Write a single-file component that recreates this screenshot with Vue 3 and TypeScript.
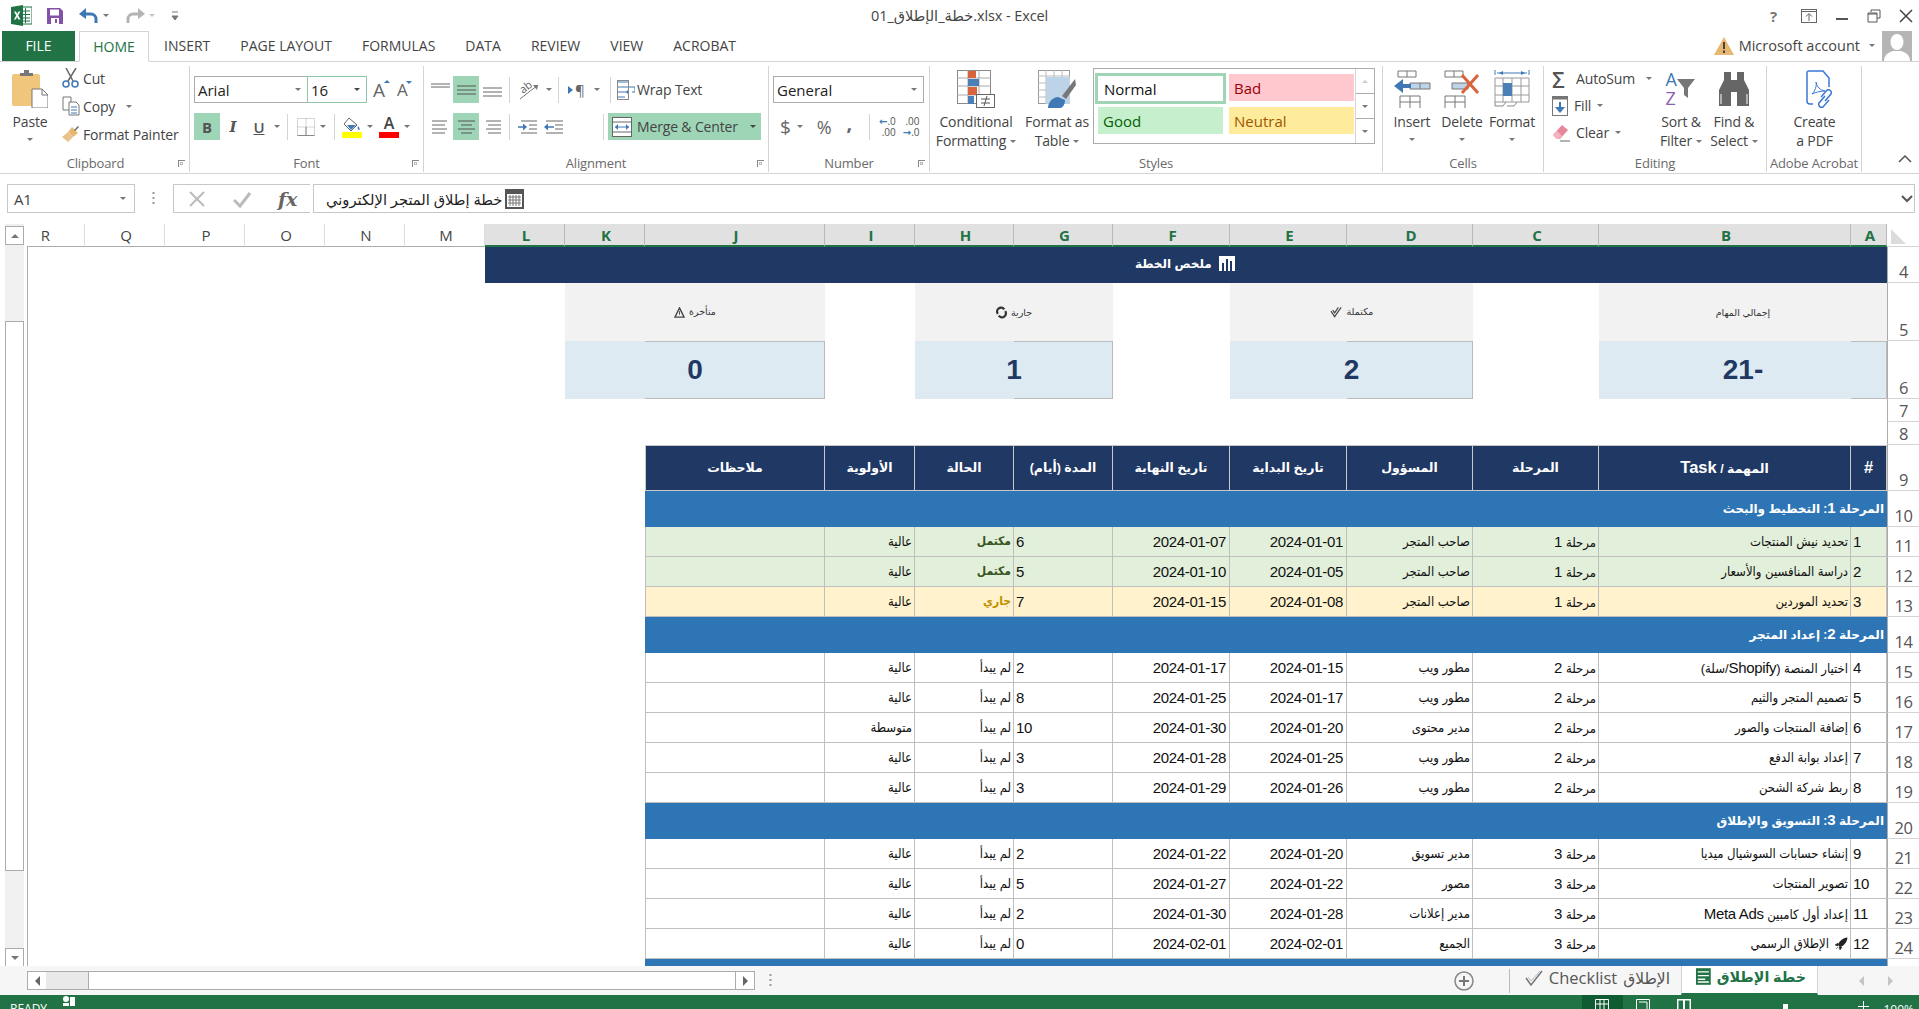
<script setup lang="ts">
interface Task {
  id: number
  task: string
  phase: number
  owner: string
  start: string
  end: string
  days: number
  status: string
  prio: string
  tone?: string
  rocket?: boolean
}

const letters = ['R', 'Q', 'P', 'O', 'N', 'M', 'L', 'K', 'J', 'I', 'H', 'G', 'F', 'E', 'D', 'C', 'B', 'A']
const selected = letters.slice(6)
const widths = [58, 80, 80, 80, 80, 80, 80, 80, 180, 90, 99, 99, 117, 117, 126, 126, 252, 36, 32]

const cards = [
  {label: 'متأخرة', value: '0', icon: 'warn', span: 180, gap: 1},
  {label: 'جارية', value: '1', icon: 'spin', span: 99, gap: 1},
  {label: 'مكتملة', value: '2', icon: 'check', span: 126, gap: 1},
  {label: 'إجمالي المهام', value: '-21', icon: '', span: 36, gap: 0},
]

const heads = ['ملاحظات', 'الأولوية', 'الحالة', 'المدة (أيام)', 'تاريخ النهاية', 'تاريخ البداية', 'المسؤول', 'المرحلة', 'المهمة / Task', '#']

const owner1 = 'صاحب المتجر'
const dev = 'مطور ويب'
const wait = 'لم يبدأ'
const high = 'عالية'

const sections: {title: string; row: number; tasks: Task[]}[] = [
  {
    title: 'المرحلة 1: التخطيط والبحث', row: 10, tasks: [
      {id: 1, task: 'تحديد نيش المنتجات', phase: 1, owner: owner1, start: '2024-01-01', end: '2024-01-07', days: 6, status: 'مكتمل', prio: high, tone: 'done'},
      {id: 2, task: 'دراسة المنافسين والأسعار', phase: 1, owner: owner1, start: '2024-01-05', end: '2024-01-10', days: 5, status: 'مكتمل', prio: high, tone: 'done'},
      {id: 3, task: 'تحديد الموردين', phase: 1, owner: owner1, start: '2024-01-08', end: '2024-01-15', days: 7, status: 'جاري', prio: high, tone: 'doing'},
    ],
  },
  {
    title: 'المرحلة 2: إعداد المتجر', row: 14, tasks: [
      {id: 4, task: 'اختيار المنصة (Shopify/سلة)', phase: 2, owner: dev, start: '2024-01-15', end: '2024-01-17', days: 2, status: wait, prio: high},
      {id: 5, task: 'تصميم المتجر والثيم', phase: 2, owner: dev, start: '2024-01-17', end: '2024-01-25', days: 8, status: wait, prio: high},
      {id: 6, task: 'إضافة المنتجات والصور', phase: 2, owner: 'مدير محتوى', start: '2024-01-20', end: '2024-01-30', days: 10, status: wait, prio: 'متوسطة'},
      {id: 7, task: 'إعداد بوابة الدفع', phase: 2, owner: dev, start: '2024-01-25', end: '2024-01-28', days: 3, status: wait, prio: high},
      {id: 8, task: 'ربط شركة الشحن', phase: 2, owner: dev, start: '2024-01-26', end: '2024-01-29', days: 3, status: wait, prio: high},
    ],
  },
  {
    title: 'المرحلة 3: التسويق والإطلاق', row: 20, tasks: [
      {id: 9, task: 'إنشاء حسابات السوشيال ميديا', phase: 3, owner: 'مدير تسويق', start: '2024-01-20', end: '2024-01-22', days: 2, status: wait, prio: high},
      {id: 10, task: 'تصوير المنتجات', phase: 3, owner: 'مصور', start: '2024-01-22', end: '2024-01-27', days: 5, status: wait, prio: high},
      {id: 11, task: 'إعداد أول كامبين Meta Ads', phase: 3, owner: 'مدير إعلانات', start: '2024-01-28', end: '2024-01-30', days: 2, status: wait, prio: high},
      {id: 12, task: 'الإطلاق الرسمي', phase: 3, owner: 'الجميع', start: '2024-02-01', end: '2024-02-01', days: 0, status: wait, prio: high, rocket: true},
    ],
  },
]

// latin runs are set a bit larger than the arabic, dejavu's arabic is wide
function parts(text: string) {
  return text.split(/([A-Za-z0-9#][A-Za-z0-9 ]*)/).filter(Boolean).map(t => ({t, lat: /^[A-Za-z0-9#]/.test(t)}))
}
</script>

<template>
  <div class="app">
    <header class="titlebar">
      <svg class="xl" width="21" height="21" viewBox="0 0 21 21">
        <rect x="8" y="2" width="13" height="17" fill="#fff" stroke="#217346"/>
        <path d="M11 6h8M11 9.500h8M11 13h8M11 16h8M14.500 3v15" stroke="#217346"/>
        <path d="M0 2 12 0v21L0 19z" fill="#217346"/>
        <path d="M3 6.500h2l1.200 2.600 1.300-2.600h1.900l-2.200 4 2.300 4H7.400L6.100 12l-1.300 2.500H2.900l2.300-4z" fill="#fff"/>
      </svg>
      <svg class="save" width="16" height="16" viewBox="0 0 16 16">
        <path d="M0 0h13l3 3v13H0z" fill="#8351a6"/>
        <rect x="3" y="1.500" width="9" height="6" fill="#fff"/>
        <rect x="4" y="10" width="8" height="6" fill="#fff"/>
        <rect x="8" y="11" width="2" height="4" fill="#8351a6"/>
      </svg>
      <svg class="undo" width="20" height="16" viewBox="0 0 20 16"><path d="M5 6h7a5 5 0 0 1 5 5v4" fill="none" stroke="#3f78b5" stroke-width="3"/><path d="M0 6 7 0v11z" fill="#3f78b5"/></svg>
      <i class="caret mini"></i>
      <svg class="redo" width="20" height="16" viewBox="0 0 20 16"><path d="M15 6H8a5 5 0 0 0-5 5v4" fill="none" stroke="#b4b4b4" stroke-width="3"/><path d="M20 6l-7-6v11z" fill="#b4b4b4"/></svg>
      <i class="caret mini pale"></i>
      <svg class="qat" width="8" height="10" viewBox="0 0 8 10"><path d="M1 1h6M1 5h6l-3 4z" fill="#777" stroke="#777"/></svg>
      <div class="doc-title">خطة_الإطلاق_01.xlsx - Excel</div>
      <div class="win">
        <span class="help">?</span>
        <svg width="16" height="14" viewBox="0 0 16 14"><rect x=".5" y=".5" width="15" height="13" fill="none" stroke="#666"/><path d="M1 2.500h14M8 12V5M5 7.500l3-3 3 3" fill="none" stroke="#666"/></svg>
        <svg width="14" height="14" viewBox="0 0 14 14"><path d="M1 10h12" stroke="#555" stroke-width="2"/></svg>
        <svg width="14" height="14" viewBox="0 0 14 14"><path d="M4 3V1h9v8h-3M1 4h9v9H1z" fill="none" stroke="#555"/><path d="M1 5h9" stroke="#555"/></svg>
        <svg width="14" height="14" viewBox="0 0 14 14"><path d="M1 1l12 12M13 1 1 13" stroke="#444" stroke-width="1.500"/></svg>
      </div>
    </header>

    <nav class="tabs">
      <a class="tab file">FILE</a>
      <a class="tab home">HOME</a>
      <a class="tab">INSERT</a>
      <a class="tab">PAGE LAYOUT</a>
      <a class="tab">FORMULAS</a>
      <a class="tab">DATA</a>
      <a class="tab">REVIEW</a>
      <a class="tab">VIEW</a>
      <a class="tab">ACROBAT</a>
      <div class="account">
        <svg width="20" height="18" viewBox="0 0 20 18"><path d="M10 0l10 18H0z" fill="#e8b872"/><path d="M9 5h2v7H9zM9 13.500h2V16H9z" fill="#444"/></svg>
        <span>Microsoft account</span>
        <i class="caret"></i>
        <div class="avatar">
          <svg width="30" height="30" viewBox="0 0 30 30"><rect width="30" height="30" fill="#b5b5b5"/><ellipse cx="15" cy="11" rx="6.500" ry="8" fill="#fff"/><path d="M2 30c0-7 6-9 9-10h8c3 1 9 3 9 10z" fill="#fff"/></svg>
        </div>
      </div>
    </nav>

    <section class="ribbon">
      <div class="group clipboard">
        <div class="body">
          <div class="big paste">
            <svg width="36" height="38" viewBox="0 0 36 38">
              <rect x="0" y="4" width="28" height="32" rx="2" fill="#efc67c"/>
              <path d="M8 6V3h4V0h5v3h4v3z" fill="#777"/>
              <path d="M20 19h10l6 6v13H20z" fill="#fff" stroke="#777"/>
              <path d="M30 19v6h6" fill="none" stroke="#777"/>
            </svg>
            <span>Paste</span>
            <i class="caret"></i>
          </div>
          <div class="stack">
            <div class="item">
              <svg width="18" height="20" viewBox="0 0 18 20"><path d="M4 0l7 13M14 0 6 13" stroke="#666" stroke-width="1.500"/><circle cx="4" cy="16" r="3" fill="none" stroke="#3f78b5" stroke-width="1.500"/><circle cx="13" cy="16" r="3" fill="none" stroke="#3f78b5" stroke-width="1.500"/></svg>
              <span>Cut</span>
            </div>
            <div class="item">
              <svg width="18" height="20" viewBox="0 0 18 20"><path d="M1 1h8v13H1z" fill="#fff" stroke="#777"/><path d="M7 6h7l3 3v10H7z" fill="#fff" stroke="#777"/><path d="M9 11h6M9 14h6M9 17h6" stroke="#3f78b5"/></svg>
              <span>Copy</span>
              <i class="caret far"></i>
            </div>
            <div class="item">
              <svg width="18" height="18" viewBox="0 0 18 18"><path d="M10 2l6 6-5 4-5-5z" fill="#e8b872"/><path d="M6 7l5 5-5 5-6-5z" fill="#e8c48c"/><path d="M12 5l4-4 1 1-4 4z" fill="#666"/></svg>
              <span>Format Painter</span>
            </div>
          </div>
        </div>
        <div class="label">Clipboard<i class="launcher"></i></div>
      </div>

      <div class="group font">
        <div class="body rows">
          <div class="line">
            <div class="select fontname">Arial<i class="caret"></i></div>
            <div class="select fontsize">16<i class="caret dark"></i></div>
            <span class="grow">A<i class="tip up"></i></span>
            <span class="grow small">A<i class="tip"></i></span>
          </div>
          <div class="line">
            <span class="ib on bold">B</span>
            <span class="ib italic">I</span>
            <span class="ib under">U</span><i class="caret"></i>
            <i class="sep s1"></i>
            <svg class="bd" width="18" height="18" viewBox="0 0 18 18"><path d="M.5.500h17v17H.5zM9 .500v17M.5 9h17" fill="none" stroke="#aaa" stroke-dasharray="1 1"/><path d="M.5 17.500h17M9 9v8" stroke="#888"/></svg>
            <i class="caret"></i>
            <i class="sep s2"></i>
            <span class="swatch">
              <svg width="20" height="15" viewBox="0 0 20 15"><path d="M7 1l8 7-6 6-7-7z" fill="#fff" stroke="#666"/><path d="M5 8h9l-5 5z" fill="#3f78b5"/><path d="M16 9c2 2 2 4 1 4s-2-2-1-4z" fill="#3f78b5"/></svg>
              <b class="yellow"></b>
            </span>
            <i class="caret"></i>
            <span class="swatch a">A<b class="red"></b></span>
            <i class="caret"></i>
          </div>
        </div>
        <div class="label">Font<i class="launcher"></i></div>
      </div>

      <div class="group align">
        <div class="body rows">
          <div class="line">
            <span class="ib wide"><svg width="19" height="14" viewBox="0 0 19 14"><path d="M0 1h19M0 4h19" stroke="#666"/></svg></span>
            <span class="ib wide on"><svg width="19" height="14" viewBox="0 0 19 14"><path d="M0 3h19M0 7h19M0 11h19" stroke="#555"/></svg></span>
            <span class="ib wide"><svg width="19" height="14" viewBox="0 0 19 14"><path d="M0 5h19M0 9h19M0 13h19" stroke="#666"/></svg></span>
            <i class="sep s3"></i>
            <span class="orient">
              <span class="ab">ab</span>
              <svg width="24" height="22" viewBox="0 0 24 22"><path d="M2 20 20 6" stroke="#777"/><path d="M20 6l-5 0 4 5z" fill="#777"/></svg>
            </span>
            <i class="caret"></i>
            <i class="sep s4"></i>
            <span class="para"><i class="tri"></i>¶</span>
            <i class="caret"></i>
            <i class="sep s5"></i>
            <svg class="wrapi" width="18" height="20" viewBox="0 0 18 20"><path d="M0 2h12M0 7h18v5h-3M0 12h10M0 17h8" fill="none" stroke="#3f78b5"/><path d="M12 9l-3 3 3 3z" fill="#3f78b5"/><rect x=".5" y=".5" width="11" height="19" fill="none" stroke="#888"/></svg>
            <span class="txt">Wrap Text</span>
          </div>
          <div class="line">
            <span class="ib wide"><svg width="17" height="14" viewBox="0 0 17 14"><path d="M0 1h15M0 5h13M0 9h15M0 13h13" stroke="#666"/></svg></span>
            <span class="ib wide on"><svg width="17" height="14" viewBox="0 0 17 14"><path d="M0 1h17M3 5h11M0 9h17M3 13h11" stroke="#555"/></svg></span>
            <span class="ib wide"><svg width="17" height="14" viewBox="0 0 17 14"><path d="M2 1h15M4 5h13M2 9h15M4 13h13" stroke="#666"/></svg></span>
            <i class="sep s3"></i>
            <svg class="indent" width="19" height="14" viewBox="0 0 19 14"><path d="M0 7h7" stroke="#3f78b5" stroke-width="1.500"/><path d="M5 3.500 9 7l-4 3.500z" fill="#3f78b5"/><path d="M3 1h16M11 5h8M11 9h8M3 13h16" stroke="#666"/></svg>
            <svg class="indent two" width="19" height="14" viewBox="0 0 19 14"><path d="M3 7h7" stroke="#3f78b5" stroke-width="1.500"/><path d="M4 3.500 0 7l4 3.500z" fill="#3f78b5"/><path d="M2 1h17M11 5h8M11 9h8M2 13h17" stroke="#666"/></svg>
            <i class="sep s6"></i>
            <div class="merge">
              <svg width="20" height="20" viewBox="0 0 20 20"><rect x=".5" y=".5" width="19" height="19" fill="#fff" stroke="#666"/><path d="M0 5h20M0 15h20" stroke="#666"/><path d="M3 10h14" stroke="#3f78b5"/><path d="M6 7l-3 3 3 3zM14 7l3 3-3 3z" fill="#3f78b5"/></svg>
              <span>Merge &amp; Center</span>
              <i class="caret dark"></i>
            </div>
          </div>
        </div>
        <div class="label">Alignment<i class="launcher"></i></div>
      </div>

      <div class="group number">
        <div class="body rows">
          <div class="line"><div class="select general">General<i class="caret"></i></div></div>
          <div class="line numline">
            <span class="cur">$</span><i class="caret"></i>
            <span class="pct">%</span>
            <span class="comma">,</span>
            <i class="sep s7"></i>
            <span class="dec"><b>←</b>.0<br>.00</span>
            <span class="dec">.00<br><b>→</b>.0</span>
          </div>
        </div>
        <div class="label">Number<i class="launcher"></i></div>
      </div>

      <div class="group styles">
        <div class="body">
          <div class="big cond">
            <svg width="38" height="38" viewBox="0 0 38 38">
              <rect x=".5" y=".5" width="33" height="33" fill="#fff" stroke="#888"/>
              <path d="M11 0v34M22 0v34M0 8h34M0 16h34M0 25h34" stroke="#aaa"/>
              <rect x="11" y="1" width="8" height="7" fill="#d9633c"/>
              <rect x="11" y="9" width="11" height="7" fill="#4a7fb8"/>
              <rect x="11" y="17" width="9" height="8" fill="#d9633c"/>
              <rect x="11" y="26" width="6" height="8" fill="#4a7fb8"/>
              <rect x="19.500" y="24.500" width="18" height="13" fill="#fff" stroke="#666"/>
              <path d="M24 29h9M24 33h9M30 26l-3 10" stroke="#555"/>
            </svg>
            <span>Conditional</span>
            <span>Formatting<i class="caret inl"></i></span>
          </div>
          <div class="big fmt">
            <svg width="38" height="38" viewBox="0 0 38 38">
              <rect x=".5" y=".5" width="31" height="33" fill="#fff" stroke="#999"/>
              <path d="M8 0v34M16 0v34M24 0v34M0 6h32M0 13h32M0 20h32M0 27h32" stroke="#bbb"/>
              <rect x="8" y="7" width="24" height="27" fill="#bdd3e8"/>
              <path d="M37 9 24 26l4 3L38 15z" fill="#777"/>
              <path d="M10 38c0-6 5-11 10-11l7 3c0 4-2 8-5 8z" fill="#3f78b5"/>
            </svg>
            <span>Format as</span>
            <span>Table<i class="caret inl"></i></span>
          </div>
          <div class="gallery">
            <div class="cells">
              <span class="st normal">Normal</span>
              <span class="st bad">Bad</span>
              <span class="st good">Good</span>
              <span class="st neutral">Neutral</span>
            </div>
            <div class="gscroll">
              <span><i class="caret up pale"></i></span>
              <span><i class="caret"></i></span>
              <span class="more"><i class="caret"></i></span>
            </div>
          </div>
        </div>
        <div class="label">Styles</div>
      </div>

      <div class="group cellsg">
        <div class="body">
          <div class="big">
            <svg width="38" height="38" viewBox="0 0 38 38">
              <path d="M5 1h18v6H5zM14 1v6M7 26h20v13H7zM17 26v13M7 32h20" fill="#fff" stroke="#777"/>
              <path d="M17 13h20v6H17z" fill="#bdd3e8" stroke="#777"/><path d="M27 13v6" stroke="#777"/>
              <path d="M1 16l9-7v5h8v4h-8v5z" fill="#3f78b5"/>
            </svg>
            <span>Insert</span><i class="caret"></i>
          </div>
          <div class="big">
            <svg width="38" height="38" viewBox="0 0 38 38">
              <path d="M2 1h18v6H2zM11 1v6M2 26h20v13H2zM12 26v13M2 32h20" fill="#fff" stroke="#777"/>
              <path d="M9 13h16v6H9z" fill="#bdd3e8" stroke="#777"/>
              <path d="M19 5l16 18M35 5 19 23" stroke="#d9633c" stroke-width="3"/>
            </svg>
            <span>Delete</span><i class="caret"></i>
          </div>
          <div class="big">
            <svg width="38" height="38" viewBox="0 0 38 38">
              <path d="M2 0v5M36 0v5M4 3h30" stroke="#3f78b5"/>
              <path d="M6 3l4-2v4zM32 3l-4-2v4z" fill="#3f78b5"/>
              <path d="M2 8h34v24H2zM10 8v24M19 8v24M28 8v24M2 16h34M2 25h34" fill="none" stroke="#999"/>
              <rect x="10" y="13" width="9" height="13" fill="#4a7fb8"/>
              <path d="M2 32v4h8l3-4M14 36h7l3-4" fill="none" stroke="#888"/>
            </svg>
            <span>Format</span><i class="caret"></i>
          </div>
        </div>
        <div class="label">Cells</div>
      </div>

      <div class="group editing">
        <div class="body">
          <div class="stack">
            <div class="item">
              <span class="sigma">Σ</span><span>AutoSum</span><i class="caret far"></i>
            </div>
            <div class="item">
              <svg width="16" height="20" viewBox="0 0 16 20"><rect x=".5" y=".5" width="15" height="19" fill="#fff" stroke="#777"/><path d="M0 2h16" stroke="#777" stroke-width="3"/><path d="M8 6v9" stroke="#3f78b5" stroke-width="2"/><path d="M3 11l5 6 5-6z" fill="#3f78b5"/></svg>
              <span>Fill</span><i class="caret"></i>
            </div>
            <div class="item">
              <svg width="18" height="18" viewBox="0 0 18 18"><path d="M10 1l6 5-8 9H5l-4-4z" fill="#e8879b"/><path d="M1 11l4-4 5 5-3 3H5z" fill="#f3b3c0"/><path d="M8 17h10" stroke="#666"/></svg>
              <span>Clear</span><i class="caret"></i>
            </div>
          </div>
          <div class="big sort">
            <span class="sorticon">
              <span class="az"><b>A</b><b class="z">Z</b></span>
              <svg width="20" height="38" viewBox="16 0 20 38"><path d="M16 9h18l-7 9v10l-4-3v-7z" fill="#777"/></svg>
            </span>
            <span>Sort &amp;</span>
            <span>Filter<i class="caret inl"></i></span>
          </div>
          <div class="big find">
            <svg width="36" height="38" viewBox="0 0 36 38">
              <path d="M8 2h7v8h6V2h7v8l5 10v16H21V22h-6v14H3V20l5-10z" fill="#666"/>
              <path d="M5 24v10M31 24v10" stroke="#fff"/>
            </svg>
            <span>Find &amp;</span>
            <span>Select<i class="caret inl"></i></span>
          </div>
        </div>
        <div class="label">Editing</div>
      </div>

      <div class="group acrobat">
        <div class="body">
          <div class="big pdf">
            <svg width="36" height="38" viewBox="0 0 36 38">
              <path d="M12 1h14l6 7v9M16 34h-3a3 3 0 0 1-3-3V3a2 2 0 0 1 2-2" fill="#fff" stroke="#3a78d8" stroke-width="1.500"/>
              <path d="M15 24c3-3 5-8 4-12 1 5 4 8 9 9-4 0-9 1-13 3z" fill="none" stroke="#3a78d8"/>
              <path d="M24 27l6-7a3 3 0 0 1 4 4l-6 7M28 26l-6 7a3 3 0 0 0 4 4l6-7" fill="none" stroke="#3a78d8" stroke-width="1.500"/>
            </svg>
            <span>Create</span>
            <span>a PDF</span>
          </div>
        </div>
        <div class="label">Adobe Acrobat</div>
      </div>

      <svg class="collapse" width="14" height="8" viewBox="0 0 14 8"><path d="M1 7l6-6 6 6" fill="none" stroke="#555" stroke-width="1.500"/></svg>
    </section>

    <div class="formula">
      <div class="namebox">A1<i class="caret"></i></div>
      <svg class="fdots" width="3" height="13" viewBox="0 0 3 13"><path d="M1.500 0v2M1.500 5v2M1.500 10v2" stroke="#999" stroke-width="2"/></svg>
      <div class="fbtns">
        <svg width="18" height="18" viewBox="0 0 18 18"><path d="M2 2l14 14M16 2 2 16" stroke="#bbb" stroke-width="2"/></svg>
        <svg width="18" height="18" viewBox="0 0 18 18"><path d="M1 10l6 6L17 3" fill="none" stroke="#bbb" stroke-width="3"/></svg>
        <span class="fx">fx</span>
      </div>
      <div class="fbox">
        <span class="ftext" dir="rtl">خطة إطلاق المتجر الإلكتروني</span>
        <svg width="19" height="20" viewBox="0 0 19 20"><rect width="19" height="20" fill="#555"/><rect x="2" y="5" width="15" height="13" fill="#fff"/><path d="M5 6v11M8 6v11M11 6v11M14 6v11M3 8h13M3 11h13M3 14h13" stroke="#777"/></svg>
        <svg class="fchev" width="12" height="8" viewBox="0 0 12 8"><path d="M1 1l5 5 5-5" fill="none" stroke="#555" stroke-width="2"/></svg>
      </div>
    </div>

    <main class="sheet">
      <div class="vscroll">
        <span class="vbtn"><i class="caret up"></i></span>
        <span class="vthumb"></span>
        <span class="vbtn end"><i class="caret"></i></span>
      </div>
      <div class="grid">
        <table>
          <colgroup><col v-for="w in widths" :width="w"></colgroup>
          <thead>
            <tr class="cols">
              <th v-for="l in letters" :class="{sel: selected.includes(l), cut: l == 'R'}">{{ l }}</th>
              <th class="corner"><svg width="15" height="15" viewBox="0 0 15 15"><path d="M0 0v15h15z" fill="#dcdcdc"/></svg></th>
            </tr>
          </thead>
          <tbody>
            <tr class="r36">
              <td class="lead" colspan="6"></td>
              <td class="banner" colspan="12" dir="rtl">
                <svg width="16" height="15" viewBox="0 0 16 15"><path d="M0 0h16v15H0z" fill="#fff"/><path d="M3 15V7h2v8zM7 15V3h2v12zM11 15V5h2v10z" fill="#1f3864"/></svg>
                ملخص الخطة
              </td>
              <td class="rn">4</td>
            </tr>
            <tr class="r58">
              <td class="lead" colspan="7"></td>
              <template v-for="c in cards" :key="c.label">
                <td class="klabel" colspan="2" dir="rtl">
                  <span>{{ c.label }}</span>
                  <svg v-if="c.icon == 'warn'" width="11" height="11" viewBox="0 0 12 12"><path d="M6 1l5 10H1z" fill="none" stroke="#444" stroke-width="1.500"/><path d="M6 4.500v4" stroke="#444"/></svg>
                  <svg v-if="c.icon == 'spin'" width="11" height="13" viewBox="0 0 12 13"><path d="M2 8A4 4 0 0 1 9 3M10 5a4 4 0 0 1-7 5" fill="none" stroke="#333" stroke-width="2.500"/></svg>
                  <svg v-if="c.icon == 'check'" width="13" height="12" viewBox="0 0 14 12"><path d="M1 5l4 6 7-10M3 4l2 3 4-6" fill="none" stroke="#444" stroke-width="1.200"/></svg>
                </td>
                <td v-if="c.gap"></td>
              </template>
              <td class="rn">5</td>
            </tr>
            <tr class="r58">
              <td class="lead" colspan="7"></td>
              <template v-for="c in cards" :key="c.label">
                <td class="kvalue" colspan="2" dir="rtl" :style="{'--edge': c.span + 'px'}">{{ c.value }}</td>
                <td v-if="c.gap"></td>
              </template>
              <td class="rn">6</td>
            </tr>
            <tr class="r23"><td class="lead" colspan="18"></td><td class="rn">7</td></tr>
            <tr class="r23"><td class="lead" colspan="18"></td><td class="rn">8</td></tr>
            <tr class="r46">
              <td class="lead" colspan="8"></td>
              <th v-for="h in heads" class="hd" dir="rtl"><template v-for="p in parts(h)"><span :class="{lat: p.lat}">{{ p.t }}</span></template></th>
              <td class="rn">9</td>
            </tr>
            <template v-for="s in sections" :key="s.row">
              <tr class="r36">
                <td class="lead" colspan="8"></td>
                <td class="phase" colspan="10" dir="rtl"><template v-for="p in parts(s.title)"><span :class="{lat: p.lat}">{{ p.t }}</span></template></td>
                <td class="rn">{{ s.row }}</td>
              </tr>
              <tr v-for="(t, i) in s.tasks" :key="t.id" class="r30" :class="t.tone">
                <td class="lead" colspan="8"></td>
                <td class="first"></td>
                <td class="ar">{{ t.prio }}</td>
                <td class="ar" :class="t.tone ? 'st-' + t.tone : ''">{{ t.status }}</td>
                <td class="num left">{{ t.days }}</td>
                <td class="num">{{ t.end }}</td>
                <td class="num">{{ t.start }}</td>
                <td class="ar">{{ t.owner }}</td>
                <td class="ar">مرحلة <span class="lat">{{ t.phase }}</span></td>
                <td class="ar">
                  <svg v-if="t.rocket" class="rocket" width="13" height="13" viewBox="0 0 13 13"><path d="M12.500.500C8 1 4 4 3 8l2 2c4-1 7-5 7.500-9.500z" fill="#222"/><path d="M3 6 0 8l3 1zM7 10l-2 3-1-3zM3 10l-2 2" fill="#222" stroke="#222" stroke-width=".5"/></svg>
                  <template v-for="p in parts(t.task)"><span :class="{lat: p.lat}">{{ p.t }}</span></template>
                </td>
                <td class="num left">{{ t.id }}</td>
                <td class="rn">{{ s.row + i + 1 }}</td>
              </tr>
            </template>
            <tr class="r36">
              <td class="lead" colspan="8"></td>
              <td class="phase" colspan="10" dir="rtl"></td>
              <td class="rn">25</td>
            </tr>
          </tbody>
        </table>
      </div>
    </main>

    <div class="tabbar">
      <div class="hscroll">
        <span class="hbtn"><i class="caret left"></i></span>
        <span class="htrack"></span>
        <span class="hthumb"></span>
        <span class="hbtn"><i class="caret right"></i></span>
      </div>
      <svg class="hdots" width="3" height="13" viewBox="0 0 3 13"><path d="M1.500 0v2M1.500 5v2M1.500 10v2" stroke="#999" stroke-width="2"/></svg>
      <svg class="plus" width="20" height="20" viewBox="0 0 20 20"><circle cx="10" cy="10" r="9" fill="none" stroke="#888" stroke-width="1.500"/><path d="M10 5v10M5 10h10" stroke="#777" stroke-width="2"/></svg>
      <i class="tabsep"></i>
      <div class="stab" dir="rtl">
        <span class="ar-t">الإطلاق</span> <span>Checklist</span>
        <svg width="18" height="16" viewBox="0 0 18 16"><path d="M1 8l5 7L17 1" fill="none" stroke="#777" stroke-width="1.500"/><path d="M3 7l3 4L15 1" fill="none" stroke="#bbb"/></svg>
      </div>
      <div class="stab active" dir="rtl">
        <span class="ar-t">خطة الإطلاق</span>
        <svg width="17" height="19" viewBox="0 0 16 18"><rect width="16" height="18" fill="#217346"/><path d="M2 4h12M2 8h12M2 12h8M2 15h12" stroke="#fff" stroke-width="1.500"/></svg>
      </div>
      <span class="navs"><i class="caret left pale"></i><i class="caret right pale"></i></span>
    </div>

    <footer class="status">
      <span class="ready">READY</span>
      <svg class="macro" width="12" height="10" viewBox="0 0 12 10"><circle cx="3" cy="3" r="3" fill="#fff"/><path d="M0 10V7h6v3z" fill="#fff"/><rect x="7" y="1" width="5" height="9" fill="#fff"/></svg>
      <div class="views">
        <span class="view on"><svg width="14" height="14" viewBox="0 0 14 14"><path d="M.5.500h13v13H.5zM5 0v14M9 0v14M0 5h14" fill="none" stroke="#fff"/></svg></span>
        <span class="view"><svg width="14" height="14" viewBox="0 0 14 14"><path d="M.5.500h13v13H.5zM3 3h8v11" fill="none" stroke="#fff"/></svg></span>
        <span class="view"><svg width="14" height="14" viewBox="0 0 14 14"><path d="M.5.500h13v13H.5zM7 0v14" fill="none" stroke="#fff" stroke-width="2"/></svg></span>
      </div>
      <i class="thumb"></i>
      <svg class="zplus" width="11" height="11" viewBox="0 0 11 11"><path d="M5.500 0v11M0 5.500h11" stroke="#fff"/></svg>
      <span class="zoomv">100%</span>
    </footer>
  </div>
</template>

<style>
html, body {
  margin: 0;
  background: #fff;
  overflow: hidden;
}
</style>

<style scoped>
.app {
  width: 1919px;
  height: 1009px;
  display: flex;
  flex-direction: column;
  overflow: hidden;
  font-family: "Open Sans", "DejaVu Sans", sans-serif;
  font-size: 14px;
  letter-spacing: -0.15px;
  color: #444;
}

i {
  display: block;
  font-style: normal;
}

.caret {
  width: 0;
  height: 0;
  border: 4px solid transparent;
  border-bottom-width: 0;
  border-top-color: #777;
  flex: none;
}
.caret.dark { border-top-color: #444; }
.caret.mini { margin: 0 0 0 4px; border-width: 3px 3px 0; border-top-color: #777; }
.caret.pale { border-top-color: #c4c4c4; }
.caret.up {
  border-width: 0 4px 4px;
  border-color: transparent transparent #777;
}
.caret.up.pale { border-bottom-color: #ccc; }
.caret.left {
  border-width: 5px 5px 5px 0;
  border-color: transparent #666 transparent transparent;
}
.caret.right {
  border-width: 5px 0 5px 5px;
  border-color: transparent transparent transparent #666;
}
.caret.left.pale { border-right-color: #c4c4c4; }
.caret.right.pale { border-left-color: #c4c4c4; }
.caret.inl {
  display: inline-block;
  margin-left: 4px;
  vertical-align: 3px;
  border-width: 3px 3px 0;
}

/* title bar */
.titlebar {
  height: 31px;
  flex: none;
  display: flex;
  align-items: center;
  padding-left: 11px;
  position: relative;
}
.save { margin-left: 15px; }
.undo { margin-left: 16px; }
.redo { margin-left: 16px; }
.qat { margin-left: 16px; }
.doc-title {
  position: absolute;
  left: 0;
  right: 0;
  text-align: center;
  font-size: 14.500px;
  letter-spacing: -0.1px;
}
.win {
  margin-left: auto;
  display: flex;
  align-items: center;
  gap: 18px;
  padding-right: 6px;
  z-index: 1;
}
.help {
  font-weight: 700;
  font-size: 15px;
  color: #777;
  margin-right: 6px;
}

/* ribbon tabs */
.tabs {
  height: 31px;
  flex: none;
  display: flex;
  border-bottom: 1px solid #d4d4d4;
  box-sizing: border-box;
  padding-left: 2px;
}
.tab {
  padding: 0 15px;
  line-height: 30px;
  font-size: 14px;
  letter-spacing: 0;
}
.tab.file {
  width: 73px;
  padding: 0;
  box-sizing: border-box;
  text-align: center;
  background: #217346;
  color: #fff;
  margin-right: 4px;
}
.tab.home {
  width: 70px;
  padding: 0;
  box-sizing: border-box;
  text-align: center;
  height: 31px;
  border: 1px solid #d4d4d4;
  border-bottom-color: #fff;
  color: #217346;
}
.account {
  margin-left: auto;
  display: flex;
  align-items: center;
  font-size: 14.500px;
  letter-spacing: 0;
  gap: 5px;
  padding-right: 7px;
  margin-top: -1px;
}
.account .caret { margin: 0 2px 0 4px; border-width: 3px 3px 0; }
.avatar { height: 30px; align-self: flex-start; margin-top: 1px; }

/* ribbon */
.ribbon {
  height: 112px;
  flex: none;
  display: flex;
  border-bottom: 1px solid #d4d4d4;
  box-sizing: border-box;
  padding: 4px 0 1px 2px;
  position: relative;
}
.group {
  display: flex;
  flex-direction: column;
  flex: none;
  box-sizing: border-box;
  border-right: 1px solid #d4d4d4;
}
.group .body {
  flex: 1;
  display: flex;
  min-height: 0;
}
.label {
  height: 18px;
  line-height: 18px;
  text-align: center;
  font-size: 13px;
  color: #6a6a6a;
  position: relative;
}
.launcher {
  position: absolute;
  right: 4px;
  top: 6px;
  width: 6px;
  height: 6px;
  border: 1px solid #888;
  border-width: 1px 0 0 1px;
  outline: 1px solid #bbb;
  outline-offset: -3px;
}
.clipboard { width: 188px; }
.font { width: 234px; }
.align { width: 345px; }
.number { width: 161px; }
.styles { width: 453px; }
.cellsg { width: 161px; }
.editing { width: 223px; }
.acrobat { width: 95px; }

.big {
  width: 50px;
  display: flex;
  flex-direction: column;
  align-items: center;
  white-space: nowrap;
  line-height: 19px;
  padding-top: 4px;
  flex: none;
}
.big svg { height: 38px; margin-bottom: 4px; flex: none; }
.big > .caret { margin-top: 7px; border-width: 3px 3px 0; }
.paste { margin-left: 5px; width: 46px; }
.stack {
  margin: -2px 0 0 9px;
  display: flex;
  flex-direction: column;
}
.item {
  height: 28px;
  flex: none;
  display: flex;
  align-items: center;
  gap: 3px;
  white-space: nowrap;
}
.item .caret { margin-left: 3px; border-width: 3px 3px 0; }
.item .caret.far { margin-left: 8px; }

.rows {
  flex-direction: column;
  gap: 10px;
  padding: 10px 0 0 4px;
}
.line {
  height: 27px;
  display: flex;
  align-items: center;
}
.select {
  height: 27px;
  box-sizing: border-box;
  border: 1px solid #ababab;
  display: flex;
  align-items: center;
  justify-content: space-between;
  padding: 0 6px 0 3px;
  color: #222;
  background: #fff;
  font-size: 15px;
  letter-spacing: 0;
}
.select .caret { border-width: 3px 3px 0; }
.fontname { width: 114px; }
.fontsize { width: 60px; border-color: #8fc7a8; margin-left: -1px; }
.grow {
  font-size: 19px;
  color: #666;
  margin-left: 6px;
  display: flex;
  flex: none;
}
.grow.small { font-size: 17px; margin-left: 7px; }
.tip {
  width: 0;
  height: 0;
  margin: 3px 0 0 -1px;
  border: 3px solid transparent;
  border-bottom-width: 0;
  border-top-color: #3f78b5;
}
.tip.up {
  border-width: 0 3px 3px;
  border-color: transparent transparent #3f78b5;
}
.ib {
  width: 26px;
  height: 27px;
  display: flex;
  align-items: center;
  justify-content: center;
  flex: none;
  font-family: "DejaVu Serif", serif;
  font-size: 15px;
  color: #555;
}
.ib.wide { width: 26px; }
.ib.on { background: #9fd5b7; }
.ib.bold { font-family: "Open Sans", sans-serif; font-weight: 700; }
.ib.under { text-decoration: underline; font-family: "Open Sans", sans-serif; font-weight: 600; margin-right: -3px; }
.ib.italic { font-style: italic; font-weight: 700; }
.sep {
  width: 1px;
  height: 26px;
  background: #d4d4d4;
  flex: none;
}
.s1 { margin: 0 9px 0 7px; }
.s2 { margin: 0 7px 0 8px; }
.font .line .caret { margin-left: 5px; border-width: 3px 3px 0; }
.font .select .caret { margin: 0; }
.swatch {
  width: 20px;
  height: 23px;
  display: flex;
  flex-direction: column;
  align-items: center;
  font-weight: 600;
  font-size: 16px;
  line-height: 17px;
  justify-content: flex-end;
}
.swatch b { display: block; width: 20px; height: 6px; }
.swatch .yellow { background: #ffff00; }
.swatch .red { background: #ff0000; }
.swatch.a { margin-left: 6px; }

.align .rows { padding-left: 3px; }
.s3 { margin: 0 8px 0 4px; }
.s4 { margin: 0 9px 0 6px; }
.s5 { margin: 0 6px 0 10px; }
.s6 { margin: 0 4px 0 40px; }
.align .line > .caret { margin-left: 4px; border-width: 3px 3px 0; }
.orient {
  width: 24px;
  height: 22px;
  display: flex;
  position: relative;
  flex: none;
}
.ab {
  position: absolute;
  left: 1px;
  top: 1px;
  font-size: 11px;
  line-height: 13px;
  color: #666;
  transform: rotate(-38deg);
}
.para { display: flex; align-items: center; gap: 2px; font-size: 15px; color: #666; width: 22px; }
.tri { width: 0; height: 0; border: 4px solid transparent; border-left: 5px solid #3f78b5; border-right: 0; }
.txt { margin-left: 2px; white-space: nowrap; }
.indent.two { margin-left: 7px; }
.merge {
  width: 153px;
  height: 27px;
  display: flex;
  align-items: center;
  gap: 5px;
  padding: 0 5px 0 4px;
  box-sizing: border-box;
  background: #9fd5b7;
  white-space: nowrap;
}
.merge .caret { margin-left: auto; border-width: 3px 3px 0; }

.general { width: 151px; }
.number .line > .caret { margin-left: 6px; border-width: 3px 3px 0; }
.numline { padding-left: 7px; }
.cur { font-size: 19px; color: #666; }
.pct { font-size: 18px; color: #666; margin-left: 14px; }
.comma { font-size: 20px; font-weight: 700; color: #666; margin: -8px 0 0 15px; }
.s7 { margin: 0 9px 0 17px; }
.dec {
  font-size: 10px;
  line-height: 11px;
  color: #555;
  letter-spacing: 0;
  text-align: right;
  margin-right: 7px;
  white-space: nowrap;
}
.dec b { color: #3f78b5; }

.cond { width: 86px; margin-left: 3px; }
.fmt { width: 74px; box-sizing: border-box; padding-left: 2px; }
.gallery {
  width: 282px;
  height: 76px;
  margin: 2px 0 0 0;
  box-sizing: border-box;
  border: 1px solid #ababab;
  display: flex;
  flex: none;
  background: #fff;
}
.cells {
  flex: 1;
  display: grid;
  grid-template-columns: 131px 125px;
  grid-template-rows: 31px 27px;
  gap: 3px 3px;
  padding: 4px 0 0 1px;
  font-size: 15px;
  letter-spacing: 0;
}
.st {
  padding-left: 5px;
  display: flex;
  align-items: center;
  box-sizing: border-box;
}
.normal { border: 3px solid #9fd5b7; color: #111; padding-left: 6px; }
.bad { background: #ffc7ce; color: #9c0006; height: 27px; margin-top: 1px; }
.good { background: #c6efce; color: #006100; margin: 0 3px; height: 27px; padding-left: 5px; }
.neutral { background: #ffeb9c; color: #9c5700; }
.gscroll {
  width: 18px;
  border-left: 1px solid #d4d4d4;
  display: flex;
  flex-direction: column;
}
.gscroll span {
  flex: 1;
  display: flex;
  align-items: center;
  justify-content: center;
  border-bottom: 1px solid #ababab;
}
.gscroll span:last-child { border-bottom: none; }
.gscroll .caret { border-width: 3px 3px 0; }
.gscroll .caret.up { border-width: 0 3px 3px; }
.more { box-shadow: inset 0 0 0 0 #777; }

.cellsg .body { padding-left: 4px; }
.editing .stack { margin: -1px 0 0 8px; width: 103px; }
.editing .item { gap: 6px; height: 27px; }
.editing .item .caret { margin-left: 0; }
.editing .item .caret.far { margin-left: 5px; }
.sigma { font-size: 22px; font-weight: 600; line-height: 1; color: #555; width: 18px; }
.sort { width: 52px; }
.sorticon { display: flex; height: 38px; margin-bottom: 4px; flex: none; }
.sorticon svg { margin: 0; }
.az {
  display: flex;
  flex-direction: column;
  font-size: 18px;
  line-height: 19px;
  font-weight: 400;
}
.az b { font-weight: 400; color: #3f78b5; }
.az .z { color: #8d5fb0; }
.find { width: 54px; }
.pdf { width: 95px; }
.collapse { position: absolute; right: 7px; bottom: 10px; }

/* formula bar */
.formula {
  height: 29px;
  margin: 10px 4px 11px 7px;
  flex: none;
  display: flex;
  align-items: stretch;
}
.namebox, .fbtns, .fbox {
  box-sizing: border-box;
  border: 1px solid #c6c6c6;
  display: flex;
  align-items: center;
  background: #fff;
}
.namebox {
  width: 128px;
  padding: 0 8px 0 6px;
  justify-content: space-between;
  font-size: 15px;
}
.namebox .caret { border-width: 3px 3px 0; }
.fdots { align-self: center; margin: 0 18px 0 17px; }
.fbtns {
  width: 137px;
  padding-left: 14px;
  gap: 27px;
  border-right: none;
}
.fx {
  font-family: "DejaVu Serif", serif;
  font-style: italic;
  font-weight: 700;
  font-size: 19px;
  color: #666;
}
.fbox {
  flex: 1;
  padding-left: 12px;
  padding-right: 1px;
  gap: 3px;
  color: #222;
  margin-left: 3px;
}
.ftext { font-size: 14.700px; letter-spacing: 0; }
.fchev { margin-left: auto; }

/* sheet */
.sheet {
  height: 742px;
  flex: none;
  display: flex;
  overflow: hidden;
}
.vscroll {
  width: 27px;
  flex: none;
  padding: 2px 3px 0 5px;
  box-sizing: border-box;
  display: flex;
  flex-direction: column;
  height: 742px;
}
.vbtn {
  height: 19px;
  flex: none;
  box-sizing: border-box;
  border: 1px solid #ababab;
  display: flex;
  align-items: center;
  justify-content: center;
  background: #fff;
}
.vthumb {
  display: block;
  height: 550px;
  margin: 76px 0 77px;
  box-sizing: border-box;
  border: 1px solid #ababab;
  background: #fff;
  flex: none;
}
.vscroll {
  background: linear-gradient(#f0f0f0, #f0f0f0) 5px 0 / 19px 100% no-repeat;
}
.grid {
  width: 1892px;
  flex: none;
}
table {
  table-layout: fixed;
  width: 1892px;
  border-spacing: 0;
  font-family: "Liberation Sans", "DejaVu Sans", sans-serif;
  letter-spacing: 0;
  color: #111;
}
td, th {
  padding: 0;
  box-sizing: border-box;
  overflow: hidden;
  white-space: nowrap;
}
.cols th {
  height: 23px;
  background: #fff;
  font-family: "Open Sans", sans-serif;
  font-weight: 400;
  font-size: 15px;
  color: #444;
  padding-left: 3px;
  border-right: 1px solid #dedede;
  border-bottom: 1px solid #ababab;
}
.cols th.cut { padding: 0 20px 0 0; }
.cols th.sel {
  background: #e1e1e1;
  color: #217346;
  font-weight: 700;
  border-right-color: #b8b8b8;
  border-bottom: 2px solid #217346;
}
.cols th.corner {
  border: none;
  border-bottom: 1px solid #d4d4d4;
  text-align: left;
  padding: 3px 0 0 4px;
  line-height: 0;
}
.r36 td { height: 36px; }
.r58 td { height: 58px; }
.r23 td { height: 23px; }
.r46 td, .r46 th { height: 46px; }
.r30 td { height: 30px; }

.lead {
  border-left: 1px solid #ababab;
  background: #fff;
}
.rn {
  border-left: 1px solid #ababab;
  border-bottom: 1px solid #d4d4d4;
  font-family: "Open Sans", sans-serif;
  font-size: 16.500px;
  letter-spacing: -0.5px;
  color: #555;
  text-align: center;
  vertical-align: bottom;
  line-height: 21px;
  background: #fff;
}
.banner {
  background: #1f3864;
  color: #fff;
  font-weight: 700;
  font-size: 12px;
  text-align: center;
  padding: 0 2px 3px 0;
}
.banner svg { vertical-align: -3px; margin-left: 4px; }
.klabel {
  background: #f2f2f2;
  text-align: center;
  font-size: 9.500px;
  color: #333;
}
.klabel svg { vertical-align: -3px; margin-right: 4px; }
.kvalue {
  position: relative;
  background: #deeaf2;
  text-align: center;
  font-size: 28px;
  font-weight: 700;
  color: #1f3864;
}
.kvalue::after {
  content: "";
  position: absolute;
  top: 0;
  right: 0;
  bottom: 0;
  width: var(--edge);
  box-sizing: border-box;
  border: 1px solid #bcbcbc;
  border-left: none;
}
.hd {
  background: #1f3864;
  color: #fff;
  font-weight: 700;
  font-size: 12.500px;
  text-align: center;
  padding-bottom: 2px;
  border-top: 1px solid #c8c8c8;
  border-right: 1px solid #c8c8c8;
  border-bottom: 1px solid #c8c8c8;
}
.hd:first-of-type { border-left: 1px solid #c8c8c8; }
.hd .lat { font-size: 16.500px; }
.phase {
  background: #2e75b6;
  color: #fff;
  font-weight: 700;
  font-size: 12px;
  text-align: right;
  padding: 0 3px 3px 0;
}
.phase .lat { font-size: 15px; }
.r30 td:not(.lead):not(.rn) {
  border-right: 1px solid #bfbfbf;
  border-bottom: 1px solid #bfbfbf;
  padding-bottom: 1px;
}
.r30 td.first { border-left: 1px solid #bfbfbf; }
.done td:not(.lead):not(.rn) { background: #e2efda; }
.doing td:not(.lead):not(.rn) { background: #fff2cc; }
.r30 td.ar {
  direction: rtl;
  text-align: right;
  padding-right: 2px;
  font-family: "Liberation Sans", "DejaVu Sans Condensed", "DejaVu Sans", sans-serif;
  font-size: 13px;
}
.ar .lat { font-size: 15px; letter-spacing: -0.35px; }
.r30 td.num {
  font-size: 15px;
  text-align: right;
  padding-right: 3px;
  letter-spacing: -0.35px;
}
.r30 td.num.left {
  text-align: left;
  padding: 0 0 1px 2px;
}
.r30 td.st-done { color: #375623; font-weight: 700; font-size: 12px; }
.r30 td.st-doing { color: #bf9000; font-weight: 700; font-size: 12px; }
.rocket { margin-left: 6px; vertical-align: -2px; }

/* bottom */
.tabbar {
  height: 29px;
  flex: none;
  background: #f6f6f6;
  display: flex;
  align-items: center;
}
.hscroll {
  margin-left: 27px;
  width: 728px;
  height: 19px;
  display: flex;
  flex: none;
  box-sizing: border-box;
  border: 1px solid #ababab;
}
.hbtn {
  width: 18px;
  display: flex;
  align-items: center;
  justify-content: center;
  background: #fff;
  flex: none;
}
.htrack { width: 42px; background: #e9e9e9; }
.hthumb { flex: 1; background: #fff; border-left: 1px solid #ababab; border-right: 1px solid #ababab; }
.hdots { margin-left: 14px; }
.plus { margin-left: 682px; }
.tabsep {
  width: 1px;
  height: 24px;
  background: #bbb;
  margin-left: 35px;
}
.stab {
  height: 29px;
  display: flex;
  align-items: center;
  gap: 6px;
  box-sizing: border-box;
  font-size: 16.500px;
  letter-spacing: 0;
  color: #555;
  flex: none;
  white-space: nowrap;
  padding-bottom: 6px;
}
.stab:not(.active) { width: 171px; padding-right: 11px; }
.stab .ar-t { font-size: 15.500px; }
.stab.active {
  width: 137px;
  padding: 0 11px 6px 14px;
  background: #fff;
  color: #217346;
  font-weight: 700;
  border-left: 1px solid #d4d4d4;
  border-right: 1px solid #d4d4d4;
  border-bottom: 2px solid #217346;
  justify-content: space-between;
}
.stab.active .ar-t { font-size: 14.300px; }
.navs {
  display: flex;
  gap: 24px;
  margin-left: 41px;
}
.status {
  height: 14px;
  flex: none;
  background: #217346;
  display: flex;
  overflow: hidden;
  color: #fff;
  font-size: 12px;
  letter-spacing: 0;
  line-height: 14px;
}
.ready { margin: 7px 0 0 10px; }
.macro { margin: 1px 0 0 16px; }
.views {
  display: flex;
  margin-left: auto;
}
.view {
  width: 41px;
  padding: 4px 0 0 13px;
  box-sizing: border-box;
  display: block;
}
.view.on { background: #0f5c33; }
.thumb {
  width: 5px;
  height: 14px;
  background: #fff;
  margin: 9px 0 0 78px;
  flex: none;
}
.zplus { margin: 6px 0 0 70px; flex: none; }
.zoomv { margin: 8px 0 0 14px; padding-right: 5px; }
</style>
